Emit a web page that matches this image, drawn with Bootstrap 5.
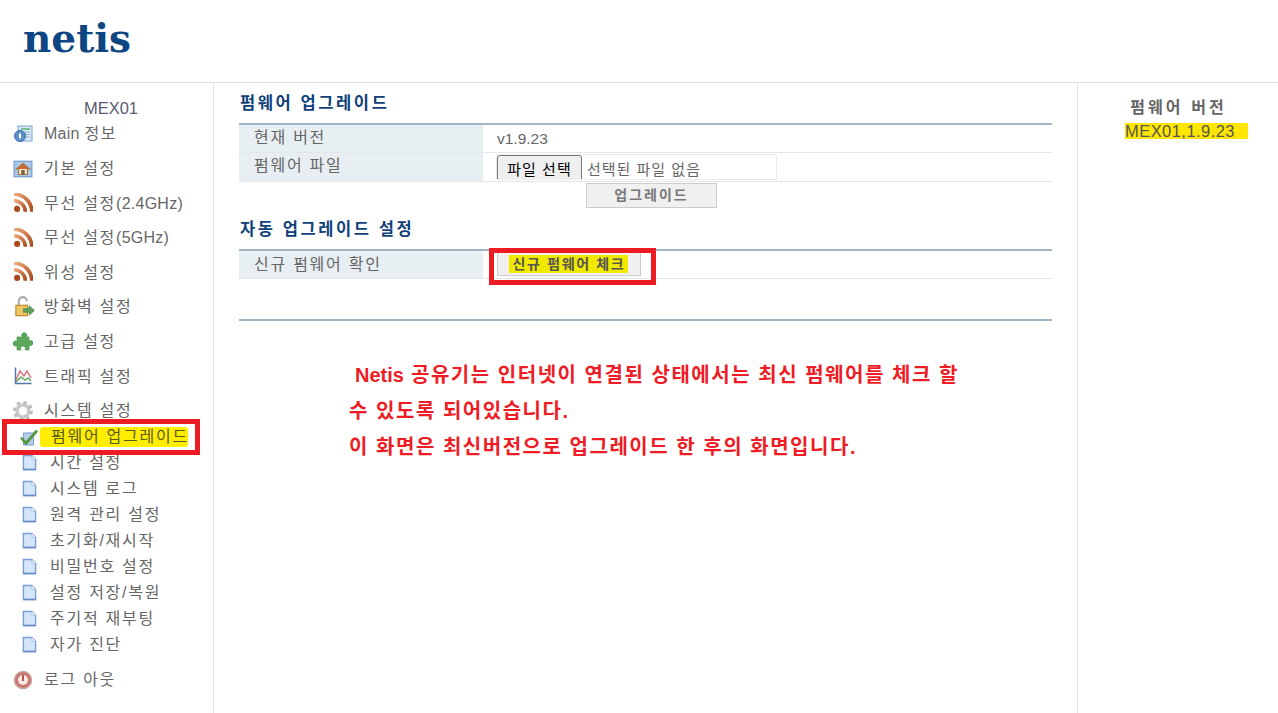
<!doctype html>
<html lang="ko"><head><meta charset="utf-8"><title>netis</title>
<link rel="stylesheet" href="https://cdn.jsdelivr.net/npm/bootstrap@5.3.0/dist/css/bootstrap.min.css">
<style>
html,body{height:713px;overflow:hidden}
body{font-family:"Liberation Sans","Noto Sans CJK KR",sans-serif;font-size:15px;color:#666;background:#fff;line-height:1.2}
.topbar{height:83px;border-bottom:1px solid #ddd;padding:14px 0 0 23px}
.brand{font-family:"DejaVu Serif",serif;font-weight:700;font-size:39px;line-height:48px;color:#0d4682}
.shell{height:630px}
.side{width:214px;border-right:1px solid #e3e3e3;padding-top:17px;position:relative;flex:none}
.devname{width:222px;text-align:center;font-size:16.5px;line-height:16px;color:#5b5b70;height:21px}
.lat{letter-spacing:.25px}
.mitem{height:26px;margin-bottom:8.6px;padding-left:13px;gap:11px;letter-spacing:1.75px;font-size:16px}
.mitem.flush{margin-bottom:0}
.mitem svg{flex:none}
.sitem{height:26px;padding-left:22px;gap:13px;letter-spacing:1.75px;font-size:16px}
.mark-side{position:relative;z-index:1}
.on-yellow{color:#5a5a20}
.hl-side{position:absolute;left:40px;top:344px;width:148px;height:20px;background:#ffee00;border-radius:3px;z-index:0}
.redbox{position:absolute;border:5px solid #ed1c24;z-index:2;pointer-events:none}
.rb-side{left:2px;top:336px;width:198px;height:36px}
.mainp{width:863px;padding:0 25px;flex:none;position:relative}
.ttl{font-weight:700;font-size:16.5px;letter-spacing:2.6px;color:#103f7a;height:40px;line-height:40px;padding-left:1px}
.ttl2{margin-top:4px;height:37px;line-height:34px}
.rowt{display:flex;height:29px;border-bottom:1px solid #e3e7ea}
.line-top{border-top:2px solid #a3b5c5}
.tall{height:30px}
.lab{width:244px;background:#e8eff3;padding-left:15px;letter-spacing:1.75px;line-height:26px;flex:none;font-size:16px}
.lab2{line-height:28px}
.val{padding-left:14px;flex:1;line-height:27px;min-width:0;font-size:15.5px}
.filebox{width:281px;height:26px;border:1px solid #ececec;margin:1px 0 0 -1px;overflow:hidden;display:flex;font-size:15px;line-height:29px;letter-spacing:1px}
.filebtn{width:85px;height:30px;border:1px solid #777;border-radius:3px;background:#efefef;color:#000;margin-right:5px;flex:none;text-align:center;font-size:15px;letter-spacing:1px;padding:0;line-height:27px}
.upbtn{display:block;width:131px;height:25px;margin:1px auto 0 347px;background:#f0f0f0;border:1px solid #ccc;color:#777;font-weight:700;font-size:14px;letter-spacing:2px;padding:0;line-height:23px;border-radius:0}
.chkbtn{width:144px;height:24px;background:#f0f0f0;border:1px solid #ccc;padding:0;margin-top:1px;display:block;font-weight:700;font-size:14px;line-height:20px;color:#555;border-radius:0;letter-spacing:1.65px}
.chkbtn span{display:inline-block;background:#f2e900;padding:0 3px 0 4px;line-height:18px;margin-left:-1px}
.rb-main{left:275px;top:165px;width:167px;height:37px}
.sep{height:2px;background:#a3b5c5;margin-top:40px}
.notes{color:#ee1c25;font-weight:700;font-size:20px;line-height:36px;margin:36px 0 0 110px;white-space:nowrap;letter-spacing:1.53px}
.notes .lat{letter-spacing:0}
.first-note{padding-left:6px}
.rightp{flex:1;border-left:1px solid #e3e3e3;text-align:center;padding-top:14px;position:relative}
.rt{font-weight:700;font-size:16px;letter-spacing:3.1px;color:#666;line-height:22px;padding-left:1px}
.rv{width:123px;margin:4px 0 0 47px;text-align:left;font-size:16.5px;line-height:16px;color:#555;background:#ffe600;height:16px;white-space:nowrap;letter-spacing:.45px}
.logout{margin-top:9px}
.tick-ic{margin-left:-2px;margin-right:-2px}
</style></head><body>
<svg width="0" height="0" class="position-absolute"><defs>
<linearGradient id="rs" x1="0" y1="0" x2="1" y2="1"><stop offset="0" stop-color="#f0a97a"/><stop offset="1" stop-color="#a8481c"/></linearGradient>
<symbol id="rss" viewBox="1 2 17 17"><circle cx="4.500" cy="15.500" r="2.600" fill="#a8481c"/><path d="M2 8.500a9.500 9.500 0 0 1 9.500 9.500" fill="none" stroke="url(#rs)" stroke-width="3"/><path d="M2 3a15 15 0 0 1 15 15" fill="none" stroke="url(#rs)" stroke-width="3.200"/></symbol>
<symbol id="doc" viewBox="0 0 16 18"><path d="M1.500 1.500h9l4 4v11h-13z" fill="#d5e6f8" stroke="#7a9fd6" stroke-width="1.500"/><path d="M10.500 1.500v4h4" fill="#fff" stroke="#9fbbe3"/><path d="M1.500 16.500h13" stroke="#6288c6" stroke-width="1.500"/></symbol>
</defs></svg>
<header class="topbar"><div class="brand">netis</div></header>
<div class="shell d-flex">
<nav class="side">
<div class="devname">MEX01</div>
<div class="mitem d-flex align-items-center"><svg width="20" height="20" viewBox="0 0 20 20"><rect x="5" y="2" width="14" height="15" fill="#dce9f7" stroke="#7ba3d0"/><path d="M8 5h9" stroke="#5fb07a" stroke-width="1.500"/><path d="M11 8h6M11 10.500h6M11 13h6" stroke="#9ab8d8"/><circle cx="7" cy="12" r="5.500" fill="#5d8fc8" stroke="#3f6ea8"/><path d="M7 9.500v5" stroke="#fff" stroke-width="2"/></svg><span><span class="lat">Main </span>정보</span></div>
<div class="mitem d-flex align-items-center"><svg width="20" height="20" viewBox="1 2 18 16"><rect x="2" y="3" width="16" height="14" fill="#a9c8e8" stroke="#6e98c8"/><path d="M10 5l-6 5h2v5h8v-5h2z" fill="#f2e6cf" stroke="#a8743e"/><path d="M10 5l-6 5h12z" fill="#c46a3a"/><rect x="8.500" y="11" width="3" height="4" fill="#7a5a3a"/></svg><span>기본 설정</span></div>
<div class="mitem d-flex align-items-center"><svg width="20" height="20"><use href="#rss"/></svg><span>무선 설정<span class="lat">(2.4GHz)</span></span></div>
<div class="mitem d-flex align-items-center"><svg width="20" height="20"><use href="#rss"/></svg><span>무선 설정<span class="lat">(5GHz)</span></span></div>
<div class="mitem d-flex align-items-center"><svg width="20" height="20"><use href="#rss"/></svg><span>위성 설정</span></div>
<div class="mitem d-flex align-items-center"><svg width="22" height="22" viewBox="1 1 19 19" class="lock-ic"><path d="M6 9V5.500a3.500 3.500 0 0 1 7 0" fill="none" stroke="#a9a9a9" stroke-width="1.800"/><rect x="3.500" y="9" width="10" height="9" fill="#f0c668" stroke="#b98a2c"/><path d="M10 12h5V9.500l4.500 4-4.500 4V15h-5z" fill="#5ea35e" stroke="#3d7d3d" stroke-width=".6"/></svg><span>방화벽 설정</span></div>
<div class="mitem d-flex align-items-center"><svg width="20" height="20" viewBox="0 0 20 20"><path d="M7 5h2.500a2.500 2.500 0 1 1 3.500 0H16v4a2.500 2.500 0 1 1 0 4v5h-4a2.500 2.500 0 1 0-4 0H4v-4.500a2.500 2.500 0 1 1 0-4V5z" fill="#5aa85a" stroke="#3f8a3f" stroke-width=".6"/></svg><span>고급 설정</span></div>
<div class="mitem d-flex align-items-center"><svg width="20" height="20" viewBox="0 0 20 20"><path d="M2.500 1.500v16h16" fill="none" stroke="#5177ad" stroke-width="1.500"/><path d="M3 14l4-9 4 5 3-5 4 7" fill="none" stroke="#d9727b" stroke-width="1.500"/><path d="M3 16l5-5 4 3 3-2 3 3" fill="none" stroke="#60a868" stroke-width="1.500"/></svg><span>트래픽 설정</span></div>
<div class="mitem flush d-flex align-items-center"><svg width="20" height="20" viewBox="0 0 20 20"><circle cx="10" cy="10" r="6" fill="none" stroke="#c9c9c9" stroke-width="3.500"/><circle cx="10" cy="10" r="8.500" fill="none" stroke="#bdbdbd" stroke-width="3" stroke-dasharray="3.300 3.400"/></svg><span>시스템 설정</span></div>
<div class="hl-side"></div>
<div class="sitem mark-side on-yellow d-flex align-items-center"><svg width="20" height="20" viewBox="0 0 20 20" class="tick-ic"><rect x="3.500" y="6" width="10" height="12" fill="#b7cbe6" stroke="#7a9fd6"/><path d="M1.500 10l4.500 4.500L16 3l1.800 1.500L6 18 .5 11.500z" fill="#4f9c3a" stroke="#3a7f28" stroke-width=".5"/></svg><span>펌웨어 업그레이드</span></div>
<div class="sitem d-flex align-items-center"><svg width="15" height="17"><use href="#doc"/></svg><span>시간 설정</span></div>
<div class="sitem d-flex align-items-center"><svg width="15" height="17"><use href="#doc"/></svg><span>시스템 로그</span></div>
<div class="sitem d-flex align-items-center"><svg width="15" height="17"><use href="#doc"/></svg><span>원격 관리 설정</span></div>
<div class="sitem d-flex align-items-center"><svg width="15" height="17"><use href="#doc"/></svg><span>초기화/재시작</span></div>
<div class="sitem d-flex align-items-center"><svg width="15" height="17"><use href="#doc"/></svg><span>비밀번호 설정</span></div>
<div class="sitem d-flex align-items-center"><svg width="15" height="17"><use href="#doc"/></svg><span>설정 저장/복원</span></div>
<div class="sitem d-flex align-items-center"><svg width="15" height="17"><use href="#doc"/></svg><span>주기적 재부팅</span></div>
<div class="sitem d-flex align-items-center"><svg width="15" height="17"><use href="#doc"/></svg><span>자가 진단</span></div>
<div class="mitem d-flex align-items-center logout"><svg width="20" height="20" viewBox="0 0 20 20"><circle cx="10" cy="10" r="8.500" fill="#c9776e" stroke="#c8a49f" stroke-width="1.500"/><circle cx="10" cy="10" r="5" fill="#f6e9e6" /><path d="M10 5v6" stroke="#b2524a" stroke-width="2"/></svg><span>로그 아웃</span></div>
<div class="redbox rb-side"></div>
</nav>
<main class="mainp">
<div class="ttl">펌웨어 업그레이드</div>
<div class="rowt tall line-top"><div class="lab">현재 버전</div><div class="val">v1.9.23</div></div>
<div class="rowt"><div class="lab">펌웨어 파일</div><div class="val"><div class="filebox"><span class="filebtn">파일 선택</span><span>선택된 파일 없음</span></div></div></div>
<button class="btn upbtn" type="button">업그레이드</button>
<div class="ttl ttl2">자동 업그레이드 설정</div>
<div class="rowt tall line-top"><div class="lab lab2">신규 펌웨어 확인</div><div class="val"><button class="btn chkbtn" type="button"><span>신규 펌웨어 체크</span></button></div></div>
<div class="sep"></div>
<div class="notes">
<div class="first-note"><span class="lat">Netis</span> 공유기는 인터넷이 연결된 상태에서는 최신 펌웨어를 체크 할</div>
<div>수 있도록 되어있습니다.</div>
<div>이 화면은 최신버전으로 업그레이드 한 후의 화면입니다.</div>
</div>
<div class="redbox rb-main"></div>
</main>
<aside class="rightp">
<div class="rt">펌웨어 버전</div>
<div class="rv">MEX01,1.9.23</div>
</aside>
</div>
<style>.lock-ic{margin-right:-2px}</style>
</body></html>
